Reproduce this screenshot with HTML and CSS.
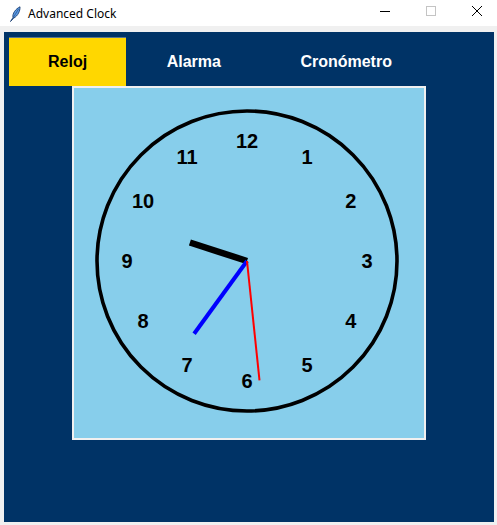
FILE: index.html
```html
<!DOCTYPE html>
<html lang="es">
<head>
<meta charset="utf-8">
<title>Advanced Clock</title>
<link rel="stylesheet" href="styles.css">
</head>
<body>
<div class="titlebar">
  <svg class="app-icon" width="16" height="16" viewBox="0 0 16 16">
    <path d="M3.5 15.5 L6 11.5 C5.2 7.5 8.5 3 13 0.8 C13.2 5 11 9.8 6.6 12.2 Z" fill="#5b9be6" stroke="#1d3f73" stroke-width="0.9"/>
    <path d="M6.2 11.8 L11.5 3" stroke="#1d3f73" stroke-width="0.6"/>
  </svg>
  <span class="title">Advanced Clock</span>
  <div class="controls">
    <div class="ctl">
      <svg width="10" height="10" viewBox="0 0 10 10"><path d="M0 5.5 H10" stroke="#000" stroke-width="1"/></svg>
    </div>
    <div class="ctl">
      <svg width="10" height="10" viewBox="0 0 10 10"><rect x="0.5" y="0.5" width="9" height="9" fill="none" stroke="#c4c4c4" stroke-width="1"/></svg>
    </div>
    <div class="ctl">
      <svg width="10" height="10" viewBox="0 0 10 10"><path d="M0 0 L10 10 M10 0 L0 10" stroke="#000" stroke-width="1"/></svg>
    </div>
  </div>
</div>
<div class="window">
  <div class="tabs">
    <div class="tab active">Reloj</div>
    <div class="tab">Alarma</div>
    <div class="tab">Cronómetro</div>
  </div>
  <div class="clock-frame">
    <svg class="clock" width="350" height="350" viewBox="2 2 350 350">
      <circle cx="175" cy="175" r="150" fill="none" stroke="#000" stroke-width="3.6"/>
      <g class="nums" text-anchor="middle">
        <text x="235" y="78.1">1</text>
        <text x="278.9" y="122">2</text>
        <text x="295" y="182">3</text>
        <text x="278.9" y="242">4</text>
        <text x="235" y="285.9">5</text>
        <text x="175" y="302">6</text>
        <text x="115" y="285.9">7</text>
        <text x="71.1" y="242">8</text>
        <text x="55" y="182">9</text>
        <text x="71.1" y="122">10</text>
        <text x="115" y="78.1">11</text>
        <text x="175" y="62">12</text>
      </g>
      <line x1="175" y1="175" x2="117.9" y2="156.5" stroke="#000" stroke-width="6.5"/>
      <line x1="175" y1="175" x2="122.1" y2="247.8" stroke="#0000ff" stroke-width="4"/>
      <line x1="175" y1="175" x2="187.5" y2="294.3" stroke="#ff0000" stroke-width="2"/>
    </svg>
  </div>
</div>
</body>
</html>
```
FILE: styles.css
```css
html, body {
  margin: 0;
  padding: 0;
}
body {
  width: 497px;
  height: 525px;
  background: #f0f0f0;
  overflow: hidden;
  font-family: "Liberation Sans", Arial, sans-serif;
}
.titlebar {
  height: 26px;
  background: #ffffff;
  display: flex;
  align-items: center;
}
.app-icon {
  margin-left: 7px;
  margin-top: 1px;
}
.title {
  margin-left: 5px;
  font-family: "Segoe UI", "Noto Sans", sans-serif;
  font-size: 12px;
  color: #000;
  margin-top: 1px;
}
.controls {
  margin-left: auto;
  margin-right: -3px;
  display: flex;
  height: 26px;
}
.ctl {
  width: 46px;
  height: 22px;
  display: flex;
  align-items: center;
  justify-content: center;
}
.window {
  margin: 6px 3px 0 4px;
  width: 490px;
  height: 490px;
  background: #003366;
}
.tabs {
  display: flex;
  gap: 1.5px;
  padding: 5px 0 0 5px;
}
.tab {
  padding: 0 39px;
  height: 48px;
  line-height: 48px;
  border-top: 1px solid transparent;
  font-size: 16px;
  font-weight: bold;
  color: #ffffff;
}
.tab.active {
  background: #ffd700;
  color: #000000;
  border-top-color: #5a7590;
}
.clock-frame {
  width: 350px;
  height: 350px;
  margin: 0 auto;
  border: 2px solid #f0f0f0;
  background: #87ceeb;
}
.clock {
  display: block;
}
.nums {
  font-family: "Liberation Sans", Arial, sans-serif;
  font-weight: bold;
  font-size: 20px;
  fill: #000;
}
```
